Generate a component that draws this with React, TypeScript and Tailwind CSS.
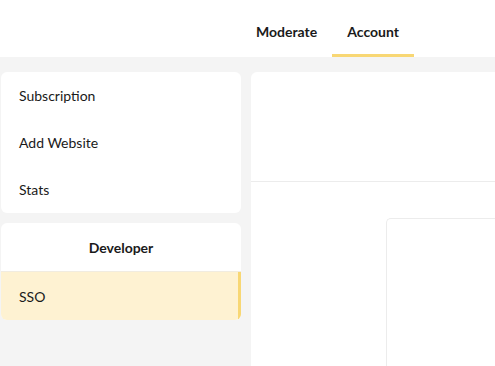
import React from 'react';

const font = { fontFamily: 'Lato, "Open Sans", sans-serif' };

export default function App() {
  return (
    <div className="w-[495px] h-[366px] overflow-hidden bg-[#f4f4f4] text-[#1a1a1a]" style={font}>
      {/* Top nav */}
      <div className="h-[57px] bg-white">
        <div className="flex ml-[241px] h-full">
          <div className="flex flex-col">
            <div className="flex-1 flex items-center pt-[8px] px-[15px] text-[14px] font-bold">Moderate</div>
            <div className="h-[3px]" />
          </div>
          <div className="flex flex-col">
            <div className="flex-1 flex items-center pt-[8px] px-[15px] text-[14px] font-bold">Account</div>
            <div className="h-[3px] bg-[#f8d774]" />
          </div>
        </div>
      </div>

      <div className="flex gap-[10px] pt-[15px] pl-[1px]">
        {/* Sidebar */}
        <div className="w-[240px] flex flex-col gap-[10px] shrink-0">
          <div className="bg-white rounded-[6px]">
            {['Subscription', 'Add Website', 'Stats'].map((label) => (
              <div key={label} className="h-[47px] flex items-center px-[18px] text-[14px]">
                {label}
              </div>
            ))}
          </div>

          <div className="bg-white rounded-[6px] overflow-hidden">
            <div className="h-[49px] flex items-center justify-center text-[14px] font-bold border-b border-[#f1ece0]">
              Developer
            </div>
            <div className="h-[48px] flex items-center px-[18px] text-[14px] bg-[#fef2d2] border-r-[3px] border-[#f8d774]">
              SSO
            </div>
          </div>
        </div>

        {/* Content panel */}
        <div className="flex-1 bg-white rounded-tl-[6px] h-[300px]">
          <div className="h-[110px] border-b border-[#ececec]" />
          <div className="pt-[36px] pl-[135px]">
            <div className="h-[200px] border-l border-t border-[#ececec] rounded-tl-[5px]" />
          </div>
        </div>
      </div>
    </div>
  );
}
